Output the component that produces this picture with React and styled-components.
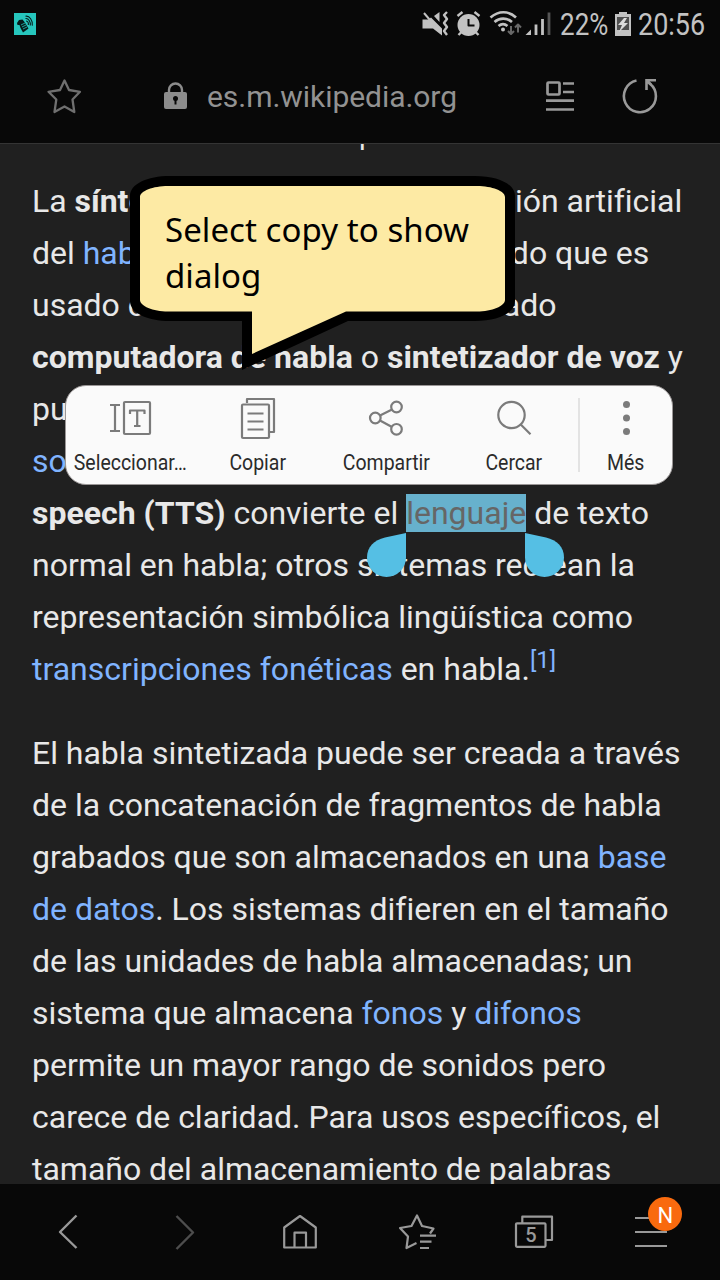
import React from "react";
import styled, { createGlobalStyle } from "styled-components";

const Global = createGlobalStyle`
  body { margin: 0; background: #080808; }
  * { box-sizing: border-box; }
  svg { display: block; flex: none; overflow: visible; }
`;

const Screen = styled.div`
  position: relative;
  width: 720px;
  height: 1280px;
  display: flex;
  flex-direction: column;
  overflow: hidden;
  background: #080808;
  font-family: Roboto, "Liberation Sans", sans-serif;
`;

const StatusBar = styled.div`
  height: 48px;
  flex: none;
  display: flex;
  align-items: center;
  justify-content: space-between;
  padding: 0 14px;
  color: #c2c2c2;
`;

const StatusGroup = styled.div`
  display: flex;
  align-items: center;
  width: 284px;
`;

const StatusText = styled.div`
  width: ${(p) => p.$w}px;
  margin-left: ${(p) => p.$gap || 0}px;
  font-size: 31px;
  line-height: 48px;
  white-space: nowrap;
  padding-top: 1px;
  & > span {
    display: inline-block;
    transform: scaleX(${(p) => p.$scale});
    transform-origin: 0 50%;
  }
`;

const AddressBar = styled.header`
  height: 96px;
  flex: none;
  display: flex;
  align-items: center;
  padding-left: 47px;
  border-bottom: 1px solid #343434;
  color: #8c8c8c;
`;

const Site = styled.div`
  display: flex;
  align-items: center;
  margin-left: 83px;
`;

const Tools = styled.div`
  display: flex;
  align-items: center;
  gap: 47px;
  margin-left: 9px;
`;

const Url = styled.div`
  width: 330px;
  margin-left: 20px;
  padding-top: 2px;
  font-size: 30px;
  line-height: 40px;
  letter-spacing: -0.05px;
  color: #929292;
`;

const Article = styled.main`
  height: 1040px;
  flex: none;
  overflow: hidden;
  padding: 0 32px;
  background: #202020;
  color: #e8e8e8;
`;

const Previous = styled.div`
  height: 31px;
  display: flex;
  align-items: flex-start;
  padding-left: 327px;
  font-size: 29px;
  line-height: 32px;
  & > span { margin-top: -26px; }
`;

const Paragraph = styled.p`
  margin: 0 0 32px;
  font-size: 32px;
  line-height: 52px;
`;

const Line = styled.span`
  display: block;
  height: 52px;
  white-space: nowrap;
  letter-spacing: ${(p) => (p.$loose ? 0.01 : -0.015)}px;
`;

const Link = styled.span`
  color: #80b4ff;
`;

const Selected = styled.mark`
  background: #67b1cd;
  color: #666;
`;

const Reference = styled.sup`
  color: #80b4ff;
  font-size: 24px;
  line-height: 1;
  vertical-align: 12px;
`;

const BottomBar = styled.nav`
  height: 96px;
  flex: none;
  display: grid;
  grid-template-columns: repeat(6, 116.4px);
  justify-content: center;
  padding-right: 3px;
`;

const NavItem = styled.div`
  display: flex;
  align-items: center;
  justify-content: center;
  position: relative;
  color: ${(p) => (p.$dim ? "#4d4d4d" : "#999")};
`;

const TabCount = styled.span`
  position: absolute;
  left: 41px;
  top: 38px;
  width: 30px;
  text-align: center;
  font-size: 20px;
  line-height: 26px;
  font-weight: 500;
`;

const Badge = styled.span`
  position: absolute;
  left: 57px;
  top: 13px;
  width: 34px;
  height: 34px;
  border-radius: 50%;
  background: #f96a0e;
  color: #fff;
  font-size: 22px;
  line-height: 37px;
  text-align: center;
`;

const Popup = styled.div`
  position: absolute;
  left: 65px;
  top: 385px;
  width: 608px;
  height: 100px;
  display: flex;
  align-items: center;
  border: 1px solid #9a9696;
  border-radius: 21px;
  background: #fafafa;
`;

const Action = styled.div`
  width: ${(p) => p.$w || 128}px;
  height: 98px;
  flex: none;
  display: flex;
  flex-direction: column;
  align-items: center;
  padding-top: 11px;
  color: #7b7b7b;
`;

const ActionLabel = styled.div`
  margin-top: 8px;
  font-size: 22.5px;
  line-height: 30px;
  white-space: nowrap;
  color: #2b2b2b;
  transform: scaleX(0.865);
`;

const Divider = styled.div`
  width: 2px;
  height: 74px;
  flex: none;
  background: #e3e3e3;
`;

const Handle = styled.svg`
  position: absolute;
  left: ${(p) => p.$x}px;
  top: 533px;
  transform: ${(p) => (p.$flip ? "scaleX(-1)" : "none")};
`;

const Bubble = styled.div`
  position: absolute;
  left: 130px;
  top: 176px;
  width: 385px;
  height: 195px;
  padding: 31px 0 0 35px;
  & > svg { position: absolute; left: 0; top: 0; }
`;

const BubbleText = styled.div`
  position: relative;
  font-family: "Noto Sans", "Open Sans", sans-serif;
  font-size: 33px;
  line-height: 46px;
  letter-spacing: 0.06px;
  white-space: nowrap;
  color: #000;
`;

const Icon = ({ w, h, sw = 2.2, children, ...rest }) => (
  <svg width={w} height={h} viewBox={`0 0 ${w} ${h}`} fill="none" stroke="currentColor" strokeWidth={sw} strokeLinejoin="round" {...rest}>
    {children}
  </svg>
);

const AppIcon = () => (
  <Icon w={22} h={22} stroke="#061b1b" sw={1.1}>
    <rect width="22" height="22" fill="#26c6bd" stroke="none" />
    <path d="M3 10L5 7L8.500 6.500L10.500 9L14.500 15.500L9 19.500L6.500 15L5.500 12L3.500 12Z" fill="#061b1b" stroke="none" />
    <path d="M7 12l4-2M8 14l4-2M9 16l4-2" stroke="#26c6bd" strokeWidth=".8" />
    <path d="M11.500 3.200c4-.8 7.500 4.500 6.800 9.500M11.500 5.500c3-.5 5.300 3.500 4.800 7M12 8c2 0 2.700 2 2.300 4" />
  </Icon>
);

const StatusIcons = () => (
  <Icon w={128} h={26} sw={2} stroke="#c2c2c2">
    <g fill="#c2c2c2" stroke="none">
      <path d="M0.500 8.500h6l2.500-2 11 11v7l-9-7H0.500zM12 5l5.500-4v10z" />
      <circle cx="46.500" cy="14" r="11" />
      <path d="M103.500 24h5.500v-5.500z" />
      <circle cx="81" cy="18.500" r="2" />
    </g>
    <path d="M2 2l17 20" strokeWidth="2" />
    <path d="M25 1l-3 3 3 4-3 4 3 4-3 4 3 4" strokeWidth="2.400" />
    <path d="M46.500 8v6.500h6" stroke="#080808" />
    <path d="M35.500 5l5-4M52.500 1l5 4M39.500 21l-3 3M53.500 21l3 3" strokeWidth="2.400" />
    <path d="M68.500 6.500c8-7 18-7 25.500 0M72.500 11c5-4.500 12.500-4.500 17.500 0M76.500 15c3-2.500 6-2.500 9 0" strokeWidth="2.600" />
    <path d="M89 15v8m-3-3l3 3 3-3M96 21.500v-8m-3 3l3-3 3 3" stroke="#686868" />
    <path d="M114 24V13.500M120.500 24V8" strokeWidth="2.800" />
    <path d="M127 24V1.500" stroke="#555" strokeWidth="2.800" />
  </Icon>
);

const Battery = () => (
  <Icon w={16} h={24} stroke="none">
    <path d="M4 0h8v2h4v22H0V2h4z" fill="#c2c2c2" />
    <path d="M2 5h12v13H2z" fill="#505050" />
    <path d="M9 6L3 13h4l-3 7 9-9H9l3-5z" fill="#ddd" />
  </Icon>
);

const Star = () => (
  <Icon w={34} h={34} sw={2.3} stroke="#6f6f6f">
    <path d="M17.500 1.500L22 11L33 12.800L25.500 20.500L27.300 33L17.500 27.500L7.500 33L9.300 20.500L1.500 12.800L13 11Z" />
  </Icon>
);

const Lock = () => (
  <Icon w={23} h={27} sw={2.4}>
    <path d="M5 11V8a6.500 6.500 0 0 1 13 0v3" />
    <rect y="10" width="23" height="17" rx="2" fill="currentColor" stroke="none" />
    <path d="M11.500 17v5.500" stroke="#080808" strokeWidth="2" />
    <circle cx="11.500" cy="16.500" r="2.500" fill="#080808" stroke="none" />
  </Icon>
);

const Reader = () => (
  <Icon w={29} h={32} sw={2.7} stroke="#999">
    <rect x="1.500" y="2.500" width="12" height="12" rx="1" />
    <path d="M17 3.500H28M17 12H28M0 20.700H28M0 29.500H28" />
  </Icon>
);

const Reload = () => (
  <Icon w={36} h={36} sw={2.6} stroke="#999" strokeLinejoin="miter">
    <path d="M14.500 2.500A16 16 0 1 0 28 5.700L25 3.500" />
    <path d="M24.500 12V2.300H34M25 3l4 3.500" />
  </Icon>
);

const actions = [
  {
    label: "Seleccionar…",
    icon: (
      <Icon w={42} h={42}>
        <path d="M1 8h10M1 34h10M6 8v26" />
        <rect x="15" y="5" width="26" height="32" rx="1" />
        <path d="M21 17v-3.500h14.500V17M28.200 14v15M25 29h6.500" />
      </Icon>
    ),
  },
  {
    label: "Copiar",
    icon: (
      <Icon w={34} h={42}>
        <path d="M6 6V2h27v33h-4" />
        <rect x="1" y="7.500" width="27" height="33.500" rx="1" />
        <path d="M6.500 16.500h16M6.500 24.500h16M6.500 32.500h16" />
      </Icon>
    ),
  },
  {
    label: "Compartir",
    icon: (
      <Icon w={36} h={42}>
        <circle cx="7.300" cy="21" r="5.300" />
        <circle cx="28.500" cy="10" r="5.300" />
        <circle cx="28.500" cy="32.300" r="5.300" />
        <path d="M12 18.500l12-6M12 23.500l12 6.500" />
      </Icon>
    ),
  },
  {
    label: "Cercar",
    icon: (
      <Icon w={36} h={42}>
        <circle cx="15.500" cy="18" r="13.200" />
        <path d="M24.500 27.200l10 10" />
      </Icon>
    ),
  },
];

const NavIcons = {
  back: <Icon w={36} h={36} sw={2.4}><path d="M26.500 1.500L10 18L26.500 34" /></Icon>,
  forward: <Icon w={36} h={36} sw={2.4}><path d="M10.500 2L27 18.500L10.500 35" /></Icon>,
  home: <Icon w={34} h={36} sw={2.2}><path d="M1.200 13.500L17 2L32.800 13.500V33.500H1.200ZM11.500 33V18.700H23V33" /></Icon>,
  favorites: (
    <Icon w={36} h={36}>
      <path d="M17.500 29L7.500 34L9 22.500L1 14L12.500 12L18 1.500L23 12L34.500 14.500L31 19.500M21 21.700h16M21 27.700h11.500M21 34h9" />
    </Icon>
  ),
  tabs: <Icon w={38} h={36}><path d="M8.300 9V2.700H38V26H32" /><rect x="2" y="9.300" width="29.500" height="23.500" rx="1" /></Icon>,
  menu: <Icon w={32} h={36}><path d="M2 4H34M2 18H34M2 32H34" /></Icon>,
};

export default function App() {
  return (
    <Screen>
      <Global />
      <StatusBar>
        <AppIcon />
        <StatusGroup>
          <StatusIcons />
          <StatusText $w={55} $gap={9.5} $scale={0.84}><span>22%</span></StatusText>
          <Battery />
          <StatusText $w={68} $gap={7} $scale={0.87}><span>20:56</span></StatusText>
        </StatusGroup>
      </StatusBar>
      <AddressBar>
        <Star />
        <Site>
          <Lock />
          <Url>es.m.wikipedia.org</Url>
        </Site>
        <Tools>
          <Reader />
          <Reload />
        </Tools>
      </AddressBar>
      <Article>
        <Previous><span>p</span></Previous>
        <Paragraph>
          <Line>La <b>síntesis de habla</b> es la producción artificial</Line>
          <Line>del <Link>habla</Link>. El sistema computarizado que es</Line>
          <Line>usado con este propósito es llamado</Line>
          <Line $loose><b>computadora de habla</b> o <b>sintetizador de voz</b> y</Line>
          <Line>puede ser implementado en productos</Line>
          <Line><Link>software</Link> o <Link>hardware</Link>. Un sistema <b>text-to-</b></Line>
          <Line $loose><b>speech (TTS)</b> convierte el <Selected>lenguaje</Selected> de texto</Line>
          <Line>normal en habla; otros sistemas recrean la</Line>
          <Line>representación simbólica lingüística como</Line>
          <Line $loose><Link>transcripciones fonéticas</Link> en habla.<Reference>[1]</Reference></Line>
        </Paragraph>
        <Paragraph>
          <Line>El habla sintetizada puede ser creada a través</Line>
          <Line>de la concatenación de fragmentos de habla</Line>
          <Line>grabados que son almacenados en una <Link>base</Link></Line>
          <Line><Link>de datos</Link>. Los sistemas difieren en el tamaño</Line>
          <Line>de las unidades de habla almacenadas; un</Line>
          <Line>sistema que almacena <Link>fonos</Link> y <Link>difonos</Link></Line>
          <Line>permite un mayor rango de sonidos pero</Line>
          <Line>carece de claridad. Para usos específicos, el</Line>
          <Line>tamaño del almacenamiento de palabras</Line>
        </Paragraph>
      </Article>
      <BottomBar>
        <NavItem>{NavIcons.back}</NavItem>
        <NavItem $dim>{NavIcons.forward}</NavItem>
        <NavItem>{NavIcons.home}</NavItem>
        <NavItem>{NavIcons.favorites}</NavItem>
        <NavItem>{NavIcons.tabs}<TabCount>5</TabCount></NavItem>
        <NavItem>{NavIcons.menu}<Badge>N</Badge></NavItem>
      </BottomBar>
      <Handle $x={367} width="39" height="44"><path d="M39 0L18 4.500C7 7 0 14 0 24.500A19.500 19.500 0 0 0 39 24.500Z" fill="#55bfe4" /></Handle>
      <Handle $x={524.5} $flip width="39" height="44"><path d="M39 0L18 4.500C7 7 0 14 0 24.500A19.500 19.500 0 0 0 39 24.500Z" fill="#55bfe4" /></Handle>
      <Bubble>
        <svg width="385" height="195">
          <path d="M40 0H345C368 0 385 8 385 20V125C385 137 368 145 345 145H218L112 194V145H40C17 145 0 137 0 125V20C0 8 17 0 40 0Z" fill="#000" />
          <path d="M38 10H347C362 10 375 15 375 21V124C375 130 362 135.500 347 135.500H216L122 178V135.500H38C23 135.500 10 130 10 124V21C10 15 23 10 38 10Z" fill="#fdeaa4" />
        </svg>
        <BubbleText>Select copy to show<br />dialog</BubbleText>
      </Bubble>
      <Popup>
        {actions.map((a) => (
          <Action key={a.label}>
            {a.icon}
            <ActionLabel>{a.label}</ActionLabel>
          </Action>
        ))}
        <Divider />
        <Action $w={92}>
          <Icon w={8} h={42}>
            <g fill="currentColor" stroke="none">
              <circle cx="4.500" cy="7.500" r="3.500" />
              <circle cx="4.500" cy="21" r="3.500" />
              <circle cx="4.500" cy="34.500" r="3.500" />
            </g>
          </Icon>
          <ActionLabel>Més</ActionLabel>
        </Action>
      </Popup>
    </Screen>
  );
}
